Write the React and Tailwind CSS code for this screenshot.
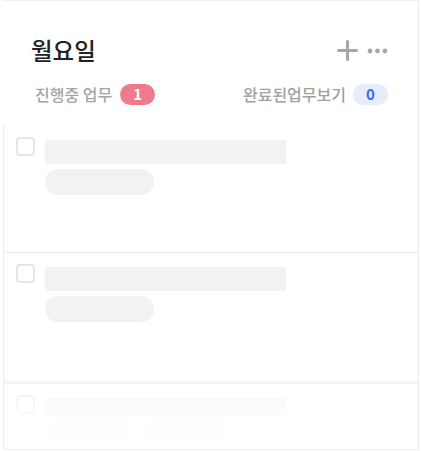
import React from "react";

function Item({ first, faded, band }) {
  return (
    <div
      className={
        "relative flex gap-[10px] pl-[12px] " +
        (first ? "pt-[13px] h-[128px]" : band ? "border-t-[3px] border-[#f4f4f4] pt-[11px] h-[68px] overflow-hidden" : "border-t border-[#e9e9e9] pt-[11px] h-[129px]")
      }
    >
      <div className="w-[19px] h-[19px] rounded-[4px] border-2 border-[#e6e6e6] shrink-0" />
      <div className="flex flex-col gap-[5px] pt-[3px]">
        <div className="w-[241px] h-[24px] rounded-[2px] bg-[#f2f2f2]" />
        {faded ? (
          <div className="flex gap-[8px]">
            <div className="w-[88px] h-[26px] rounded-full bg-[#f2f2f2]" />
            <div className="w-[88px] h-[26px] rounded-full bg-[#f2f2f2]" />
          </div>
        ) : (
          <div className="w-[109px] h-[26px] rounded-full bg-[#f2f2f2]" />
        )}
      </div>
      {faded && (
        <div className="absolute inset-0 bg-gradient-to-b from-white/40 via-white/90 via-55% to-white" />
      )}
    </div>
  );
}

export default function App() {
  return (
    <div
      className="w-[421px] h-[451px] bg-white"
      style={{ fontFamily: '"Noto Sans CJK KR", "Noto Sans", sans-serif' }}
    >
      <div className="ml-[3px] w-[416px] h-[450px] border-t border-r border-b border-t-[#eef0f3] border-r-[#ececec] border-b-[#ececec] flex flex-col">
        <div className="h-[123px] pt-[33px] pl-[28px] pr-[30px]">
          <div className="flex items-center justify-between">
            <div className="text-[23.5px] leading-[33px] font-medium text-[#222]">월요일</div>
            <div className="flex items-center gap-[9px]">
              <svg width="21" height="21" viewBox="0 0 21 21">
                <path d="M10.5 1.5v18M1.5 10.5h18" stroke="#a3a7ae" strokeWidth="3" strokeLinecap="round" />
              </svg>
              <svg width="21" height="6" viewBox="0 0 21 6">
                <circle cx="3" cy="3" r="2.4" fill="#a3a7ae" />
                <circle cx="10.5" cy="3" r="2.4" fill="#a3a7ae" />
                <circle cx="18" cy="3" r="2.4" fill="#a3a7ae" />
              </svg>
            </div>
          </div>
          <div className="mt-[16px] flex items-center justify-between">
            <div className="flex items-center gap-[8px] pl-[4px]">
              <span className="text-[16px] leading-[22px] font-medium text-[#a5a5a5]">진행중 업무</span>
              <span className="w-[35px] h-[21px] rounded-full bg-[#ee7b8b] text-white text-[15px] font-bold flex items-center justify-center">1</span>
            </div>
            <div className="flex items-center gap-[7px]">
              <span className="text-[16px] leading-[22px] font-medium text-[#a0a0a0]">완료된업무보기</span>
              <span className="w-[35px] h-[21px] rounded-full bg-[#e6ecfb] text-[#3b6fe8] text-[15px] font-bold flex items-center justify-center">0</span>
            </div>
          </div>
        </div>
        <div className="flex-1 border-l border-[#ececec] flex flex-col overflow-hidden">
          <Item first />
          <Item />
          <Item band faded />
        </div>
      </div>
    </div>
  );
}
